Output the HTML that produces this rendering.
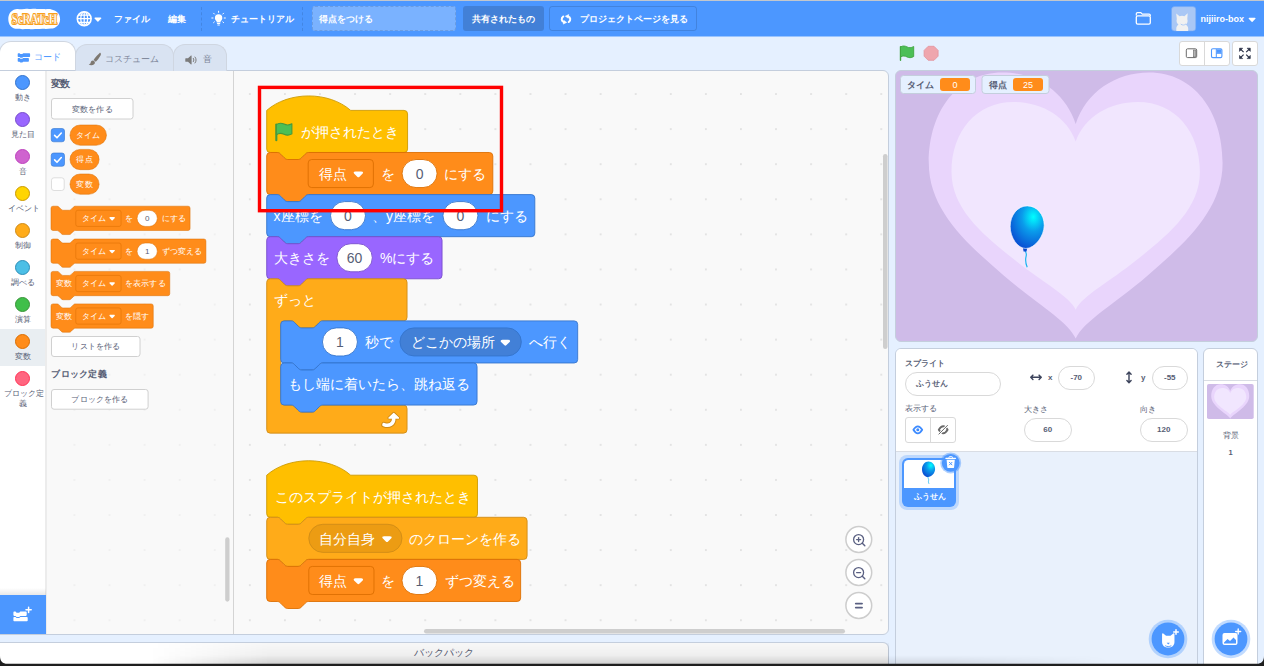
<!DOCTYPE html><html><head><meta charset="utf-8"><title>Scratch</title><style>
*{box-sizing:border-box;margin:0;padding:0}
html,body{width:1264px;height:666px;overflow:hidden;background:#E5F0FF;font-family:"Liberation Sans", sans-serif;color:#575E75}
.a{position:absolute}
#menubar{left:0;top:0;width:1264px;height:37px;background:linear-gradient(#c3c7cd 0,#c3c7cd 1px,#4C97FF 1px,#4C97FF 36px,#99C4FF 36px)}
.mt{position:absolute;color:#fff;font-weight:bold;font-size:9px;line-height:12px;white-space:nowrap}
.vd{position:absolute;top:7px;height:24px;width:0;border-left:1px dashed rgba(0,0,0,.11)}
.tab{position:absolute;border:1px solid #cfd6e1;border-bottom:none;border-radius:12px 12px 0 0;background:#D9E3F2;font-size:9px;color:#80889b;white-space:nowrap}
.tab span{position:absolute;top:0;line-height:12px}
.panel{position:absolute;background:#fff;border:1px solid #c4cedd}
.btn{position:absolute;border:1px solid #d0d0d0;background:#fff;border-radius:3px;font-size:8px;color:#575E75;text-align:center;white-space:nowrap}
.cat{position:absolute;left:0;width:45px;text-align:center;font-size:7.5px;line-height:9.5px;color:#575E75}
.dot{position:absolute;left:15px;width:15px;height:15px;border-radius:50%}
.inp{position:absolute;border:1px solid #d9d9d9;border-radius:12px;background:#fff;height:24px;font-size:8px;font-weight:bold;color:#575E75;line-height:22px;text-align:center;white-space:nowrap}
.lbl{position:absolute;font-size:7.5px;line-height:11px;white-space:nowrap;color:#575E75}
.j{display:inline-block;vertical-align:top;text-align:justify;text-align-last:justify;white-space:nowrap}
svg text{font-family:"Liberation Sans", sans-serif}
</style></head><body><div id="menubar" class="a">
<svg class="a" style="left:6px;top:6px" width="58" height="26" viewBox="6 6 58 26"><path d="M16 9.200c2-.8 4 .3 6 0c2.500-.5 4.500-.8 7-.3c2.500 .4 5-.3 7.500 0c2.500 .3 5-.2 7.500 .2c2.500 .3 5-.4 7.500 .300c4 .8 8.600 3.500 8.600 9.500c0 6-4.500 9.500-9 9.600c-2.500 .2-5 .700-7.500 .3c-2.500-.3-5 .4-7.500 .2c-2.500-.2-5 .5-7.500 .1c-2.500-.4-5 .4-7.500-.1c-2.500-.5-5 .300-7.500-.7c-3.500-1.400-5.300-5-5.300-9.500c0-4.500 2.200-8.300 7.200-9.600z" fill="#fff"/><g font-weight="bold" font-size="15.500" text-anchor="middle" stroke-linejoin="round"><text style="font-family:'Liberation Serif',serif" x="34.400" y="24.200" textLength="45.500" lengthAdjust="spacingAndGlyphs" fill="#F8A01C" stroke="#F8A01C" stroke-width="2.100">ScRATcH</text><text style="font-family:'Liberation Serif',serif" x="34.400" y="24.200" textLength="45.500" lengthAdjust="spacingAndGlyphs" fill="#fff" stroke="#F8A01C" stroke-width=".350">ScRATcH</text></g></svg>
<svg class="a" style="left:74px;top:8px" width="30" height="22" viewBox="74 9 30 22"><circle cx="84.200" cy="19.700" r="6.900" fill="#4C97FF" stroke="#fff" stroke-width="1.600"/><g stroke="#fff" stroke-width="1.250" fill="none"><ellipse cx="84.200" cy="19.700" rx="3.400" ry="6.900"/><path d="M84.200 12.700v14M77.200 19.700h14M78.300 16.100h11.800M78.300 23.300h11.800"/></g><path d="M95 18.600h5.800a.6.600 0 0 1 .45 1l-2.900 3a.6.600 0 0 1-.9 0l-2.900-3a.6.600 0 0 1 .45-1z" fill="#fff"/></svg>
<div class="mt" style="left:114px;top:12.500px"><span class="j" style="width:36.00px">ファイル</span></div>
<div class="mt" style="left:168px;top:12.500px"><span class="j" style="width:18.00px">編集</span></div>
<div class="vd" style="left:201px"></div>
<svg class="a" style="left:210px;top:9px" width="18" height="20" viewBox="210 10 18 20"><g fill="#fff"><path d="M218.600 15.300a3.700 3.700 0 0 1 3.700 3.700c0 1.500-.8 2.300-1.400 3.100c-.3 .4-.4 .8-.4 1.300h-3.800c0-.5-.1-.9-.4-1.300c-.6-.8-1.400-1.600-1.400-3.100a3.700 3.700 0 0 1 3.700-3.700z"/><rect x="216.900" y="24" width="3.400" height="1" rx=".5"/><rect x="217.300" y="25.500" width="2.600" height="1" rx=".5"/><g stroke="#fff" stroke-width="1" stroke-linecap="round"><path d="M218.600 12.200v1.200M213.600 14.200l.9 .9M223.600 14.200l-.9 .9M211.800 19h1.200M224.200 19h1.200M213.600 23.600l.8-.7M223.600 23.600l-.8-.7"/></g></g></svg>
<div class="mt" style="left:230.500px;top:12.500px"><span class="j" style="width:63.00px">チュートリアル</span></div>
<div class="vd" style="left:302px"></div>
<div class="a" style="left:312px;top:6px;width:144px;height:25px;border:1px dashed rgba(0,0,0,.12);border-radius:3px;background:rgba(255,255,255,.26)"></div>
<div class="mt" style="left:318.500px;top:12.500px"><span class="j" style="width:54.00px">得点をつける</span></div>
<div class="a" style="left:462.500px;top:6px;width:81px;height:25px;border-radius:3px;background:#4280D7"></div>
<div class="mt" style="left:471.500px;top:12.500px"><span class="j" style="width:63.00px">共有されたもの</span></div>
<div class="a" style="left:549px;top:6px;width:148px;height:25px;border-radius:3px;border:1px solid rgba(0,0,0,.13)"></div>
<svg class="a" style="left:559.300px;top:11.700px" width="14" height="14" viewBox="0 0 14 14"><g transform="translate(0,7.300) scale(1,-.8) translate(0,-7)"><g id="rfa"><path d="M5 3.300C2.300 4.600 1.900 8.200 4.300 10.600" fill="none" stroke="#fff" stroke-width="2" stroke-linecap="round"/><path d="M4.300 1l3.400 2.100l-3 2.600z" fill="#fff" stroke="#fff" stroke-width=".6" stroke-linejoin="round"/></g><use href="#rfa" transform="rotate(180 7 7)"/></g></svg>
<div class="mt" style="left:580px;top:12.500px"><span class="j" style="width:108.00px">プロジェクトページを見る</span></div>
<svg class="a" style="left:1134px;top:11px" width="19" height="16" viewBox="1134 12 19 16"><path d="M1136.300 16.400v-1.600a1.200 1.200 0 0 1 1.200-1.200h3.300l1.500 1.500h6.800a1.200 1.200 0 0 1 1.200 1.200v.6" fill="none" stroke="#fff" stroke-width="1.200"/><rect x="1136.300" y="16.800" width="14" height="8.400" rx="1.400" fill="none" stroke="#fff" stroke-width="1.300"/></svg>
<svg class="a" style="left:1171px;top:6px" width="26" height="26" viewBox="1171 6 26 26"><rect x="1171.500" y="6.600" width="24.300" height="24.400" rx="3" fill="#A9C7F5" stroke="#6FA6F5" stroke-width=".6"/><path d="M1176.300 31v-2.500c0-1.800 1-3 2.200-3.700c-1.600-1.400-2.400-3.600-1.700-5.800l-.6-5.600l3.400 2.900c1.500-.7 3.300-.7 4.800 0l3.300-3l-.4 5.600c.8 2.200 .1 4.500-1.600 5.900c1.300 .7 2.500 1.900 2.500 3.700v2.500z" fill="#F1F1F1"/><path d="M1181 24.300c1.500 1.100 3.400 1.100 4.800-.2" stroke="#A9C7F5" stroke-width=".9" fill="none" stroke-linecap="round"/></svg>
<svg class="a" style="left:1199px;top:10px" width="48" height="18" viewBox="1199 10 48 18"><text x="1200.600" y="22" font-size="9" font-weight="bold" fill="#fff" textLength="43.400" lengthAdjust="spacingAndGlyphs">nijiiro-box</text></svg>
<svg class="a" style="left:1247.500px;top:16px" width="10" height="8" viewBox="0 0 10 8"><path d="M1.200 1.800h5.800a.6.600 0 0 1 .45 1l-2.900 3a.6.600 0 0 1-.9 0l-2.900-3a.6.600 0 0 1 .45-1z" fill="#fff"/></svg>
</div>
<div class="tab" style="left:-1px;top:41px;width:77px;height:29px;background:#fff;color:#4C97FF;z-index:3"><span style="left:33.500px;top:8.500px;font-size:8.500px"><span class="j" style="width:25.50px">コード</span></span><svg class="a" style="left:17px;top:10px" width="14" height="12" viewBox="0 0 14 12"><g fill="#4C97FF"><path d="M1.400 1.200h1.100l.9 .8h1.900l.9-.8h6.200a.7.700 0 0 1 .7 .7v2.300a.7.700 0 0 1-.7 .7h-6.200l-.9 .8h-1.900l-.9-.8h-1.100a.7.700 0 0 1-.7-.7v-2.300a.7.700 0 0 1 .7-.7z"/><path d="M1.400 6h1.100l.9 .8h1.900l.9-.8h5a.7.700 0 0 1 .7 .7v2.300a.7.700 0 0 1-.7 .7h-5l-.9 .8h-1.900l-.9-.8h-1.100a.7.700 0 0 1-.7-.7v-2.300a.7.700 0 0 1 .7-.7z"/></g></svg></div>
<div class="tab" style="left:75px;top:44px;width:99px;height:27px;z-index:2"><span style="left:28.500px;top:8px"><span class="j" style="width:54.00px">コスチューム</span></span><svg class="a" style="left:12px;top:7px" width="14" height="14" viewBox="0 0 14 14"><g fill="#7d7871"><path d="M12.400 .9c.9 .5 .6 1.700-.2 3.200c-1.100 2.100-2.900 4.400-4.400 5.700l-2.200-1.900c1.100-1.600 3.100-3.900 4.800-5.600c.9-.9 1.500-1.600 2-1.400z"/><path d="M5 8.600c1 .1 1.900 1 1.900 2.100c0 1.600-1.800 2.600-3.600 2.500c-1.100-.1-2-.5-2.600-1.300c1.300 0 1.800-.5 2-1.500c.2-1 1.200-1.900 2.300-1.800z"/></g></svg></div>
<div class="tab" style="left:173px;top:44px;width:54px;height:27px;z-index:1"><span style="left:29px;top:8px">音</span><svg class="a" style="left:11px;top:10px" width="15" height="10" viewBox="0 0 15 10"><path d="M.8 3.200h2.200l3-2.600c.3-.2 .6 0 .6 .3v8.200c0 .3-.3 .5-.6 .3l-3-2.600h-2.200a.5.500 0 0 1-.5-.5v-2.600a.5.500 0 0 1 .5-.5z" fill="#7b7b7b"/><path d="M8.300 3.300c.8 .9 .8 2.500 0 3.400M10 2c1.500 1.700 1.500 4.300 0 6" fill="none" stroke="#7b7b7b" stroke-width="1" stroke-linecap="round"/></svg></div>
<div class="a" style="left:-1px;top:70px;width:890px;height:565px;border:1px solid #c4cedd;border-radius:0 6px 6px 0;background:#F9F9F9;overflow:hidden">
<div class="a" id="cats" style="left:0;top:0;width:47px;height:565px;background:linear-gradient(90deg,#fff 45px,#ececec 45px)">
<div class="dot" style="left:15px;top:4.0px;background:#4C97FF;border:1px solid #3373CC"></div>
<div class="cat" style="left:0px;top:22.0px"><span class="j" style="width:15.00px">動き</span></div>
<div class="dot" style="left:15px;top:41.0px;background:#9966FF;border:1px solid #774DCB"></div>
<div class="cat" style="left:0px;top:59.0px"><span class="j" style="width:22.50px">見た目</span></div>
<div class="dot" style="left:15px;top:78.0px;background:#CF63CF;border:1px solid #BD42BD"></div>
<div class="cat" style="left:0px;top:96.0px"><span class="j" style="width:7.50px">音</span></div>
<div class="dot" style="left:15px;top:115.0px;background:#FFD500;border:1px solid #CC9900"></div>
<div class="cat" style="left:0px;top:133.0px"><span class="j" style="width:30.00px">イベント</span></div>
<div class="dot" style="left:15px;top:152.0px;background:#FFAB19;border:1px solid #CF8B17"></div>
<div class="cat" style="left:0px;top:170.0px"><span class="j" style="width:15.00px">制御</span></div>
<div class="dot" style="left:15px;top:189.0px;background:#4CBFE6;border:1px solid #2E8EB8"></div>
<div class="cat" style="left:0px;top:207.0px"><span class="j" style="width:22.50px">調べる</span></div>
<div class="dot" style="left:15px;top:226.0px;background:#40BF4A;border:1px solid #389438"></div>
<div class="cat" style="left:0px;top:244.0px"><span class="j" style="width:15.00px">演算</span></div>
<div class="a" style="left:0px;top:258.0px;width:45px;height:36.5px;background:#E9EEF2"></div>
<div class="dot" style="left:15px;top:263.0px;background:#FF8C1A;border:1px solid #DB6E00"></div>
<div class="cat" style="left:0px;top:281.0px"><span class="j" style="width:15.00px">変数</span></div>
<div class="dot" style="left:15px;top:300.0px;background:#FF6680;border:1px solid #FF3355"></div>
<div class="cat" style="left:0px;top:318.0px"><span class="j" style="width:37.50px">ブロック定</span><br><span class="j" style="width:7.50px">義</span></div>
<div class="a" style="left:0;top:517px;width:46px;height:7px;background:linear-gradient(rgba(0,0,0,0),rgba(0,0,0,.09))"></div>
<div class="a" style="left:0;top:524px;width:46px;height:41px;background:#4C97FF"><svg class="a" style="left:13px;top:11px" width="20" height="18" viewBox="0 0 20 18"><g fill="#fff"><path d="M1.2 5.6h1.3l1.1 1.1h2.6l1.1-1.1h5.6a.8.8 0 0 1 .8.8v2.7a.8.8 0 0 1-.8.8H7.3l-1.1 1.1H3.6L2.5 9.9H1.2a.8.8 0 0 1-.8-.8V6.4a.8.8 0 0 1 .8-.8z"/><path d="M1.2 10.9h1.3l1.1 1.1h2.6l1.1-1.1h6.6a.8.8 0 0 1 .8.8v2.7a.8.8 0 0 1-.8.8H1.2a.8.8 0 0 1-.8-.8v-2.7a.8.8 0 0 1 .8-.8z"/><path d="M15.6 1.2v5.2M13 3.8h5.2" stroke="#fff" stroke-width="1.5" stroke-linecap="round"/></g></svg></div>
</div>
<svg class="a" style="left:46px;top:0" width="188" height="563" viewBox="46 71 188 563"><defs><pattern id="fgrid" x="267.400" y="76.500" width="35.080" height="35.080" patternUnits="userSpaceOnUse"><rect x="16.700" y="16.750" width="1.600" height="1.600" fill="#ececec"/></pattern></defs><rect x="46" y="71" width="188" height="563" fill="url(#fgrid)"/><text x="51.4" y="83.3" font-size="9.5" font-weight="bold" fill="#575E75" text-anchor="start" dominant-baseline="central" textLength="19.00">変数</text><rect x="51.5" y="98.5" width="81.5" height="20.5" rx="2.5" fill="#fff" stroke="#d0d0d0"/><text x="92.25" y="109.05" font-size="8.1" font-weight="400" fill="#575E75" text-anchor="middle" dominant-baseline="central" textLength="40.50">変数を作る</text><rect x="51.2" y="128.5" width="13.3" height="13.3" rx="2.5" fill="#4C97FF" stroke="#3373CC" stroke-width=".6"/><path d="M54.6 135.4l2.4 2.4l4.3-4.8" fill="none" stroke="#fff" stroke-width="1.6" stroke-linecap="round" stroke-linejoin="round"/><g transform="translate(70,125) scale(0.50625)"><rect x="0" y="0" width="72" height="40" rx="20" fill="#FF8C1A" stroke="#DB6E00"/><text x="36.0" y="20.5" fill="#fff" font-size="16" font-weight="500" text-anchor="middle" dominant-baseline="central" textLength="48.00">タイム</text></g><rect x="51.2" y="153" width="13.3" height="13.3" rx="2.5" fill="#4C97FF" stroke="#3373CC" stroke-width=".6"/><path d="M54.6 159.9l2.4 2.4l4.3-4.8" fill="none" stroke="#fff" stroke-width="1.6" stroke-linecap="round" stroke-linejoin="round"/><g transform="translate(70,149.4) scale(0.50625)"><rect x="0" y="0" width="57.5" height="40" rx="20" fill="#FF8C1A" stroke="#DB6E00"/><text x="28.75" y="20.5" fill="#fff" font-size="16" font-weight="500" text-anchor="middle" dominant-baseline="central" textLength="32.00">得点</text></g><rect x="51.5" y="177.8" width="12.7" height="12.7" rx="2.5" fill="#fff" stroke="#d6d6d6" stroke-width=".8"/><g transform="translate(70,174) scale(0.50625)"><rect x="0" y="0" width="57.5" height="40" rx="20" fill="#FF8C1A" stroke="#DB6E00"/><text x="28.75" y="20.5" fill="#fff" font-size="16" font-weight="500" text-anchor="middle" dominant-baseline="central" textLength="32.00">変数</text></g><g transform="translate(51,206.2) scale(0.50625)"><path d="m 0,4 A 4,4 0 0,1 4,0 H 12 c 2,0 3,1 4,2 l 4,4 c 1,1 2,2 4,2 h 12 c 2,0 3,-1 4,-2 l 4,-4 c 1,-1 2,-2 4,-2 H 270.7 a 4,4 0 0,1 4,4 v 40 a 4,4 0 0,1 -4,4 H 48 c -2,0 -3,1 -4,2 l -4,4 c -1,1 -2,2 -4,2 h -12 c -2,0 -3,-1 -4,-2 l -4,-4 c -1,-1 -2,-2 -4,-2 H 4 a 4,4 0 0,1 -4,-4 z" fill="#FF8C1A" stroke="#DB6E00"/><rect x="49" y="8" width="89.4" height="32" rx="4" fill="#FF8C1A" stroke="#DB6E00"/><text x="61" y="24.3" fill="#fff" font-size="16" font-weight="500" text-anchor="start" dominant-baseline="central" textLength="48.00">タイム</text><path transform="translate(114.4,20.5) scale(1.0)" fill="#fff" d="M6.36,7.79a1.43,1.43,0,0,1-1-.42L1.42,3.45a1.44,1.44,0,0,1,0-2c0.56-.56,9.31-0.56,9.87,0a1.44,1.44,0,0,1,0,2L7.37,7.37A1.43,1.43,0,0,1,6.36,7.79Z"/><text x="146.4" y="24.3" fill="#fff" font-size="16" font-weight="500" text-anchor="start" dominant-baseline="central">を</text><rect x="170" y="8" width="40" height="32" rx="16.0" fill="#fff" stroke="#DB6E00"/><text x="190.0" y="24.3" fill="#575E75" font-size="16" font-weight="500" text-anchor="middle" dominant-baseline="central">0</text><text x="218.5" y="24.3" fill="#fff" font-size="16" font-weight="500" text-anchor="start" dominant-baseline="central" textLength="48.00">にする</text></g><g transform="translate(51,239) scale(0.50625)"><path d="m 0,4 A 4,4 0 0,1 4,0 H 12 c 2,0 3,1 4,2 l 4,4 c 1,1 2,2 4,2 h 12 c 2,0 3,-1 4,-2 l 4,-4 c 1,-1 2,-2 4,-2 H 302 a 4,4 0 0,1 4,4 v 40 a 4,4 0 0,1 -4,4 H 48 c -2,0 -3,1 -4,2 l -4,4 c -1,1 -2,2 -4,2 h -12 c -2,0 -3,-1 -4,-2 l -4,-4 c -1,-1 -2,-2 -4,-2 H 4 a 4,4 0 0,1 -4,-4 z" fill="#FF8C1A" stroke="#DB6E00"/><rect x="49" y="8" width="89.4" height="32" rx="4" fill="#FF8C1A" stroke="#DB6E00"/><text x="61" y="24.3" fill="#fff" font-size="16" font-weight="500" text-anchor="start" dominant-baseline="central" textLength="48.00">タイム</text><path transform="translate(114.4,20.5) scale(1.0)" fill="#fff" d="M6.36,7.79a1.43,1.43,0,0,1-1-.42L1.42,3.45a1.44,1.44,0,0,1,0-2c0.56-.56,9.31-0.56,9.87,0a1.44,1.44,0,0,1,0,2L7.37,7.37A1.43,1.43,0,0,1,6.36,7.79Z"/><text x="146.4" y="24.3" fill="#fff" font-size="16" font-weight="500" text-anchor="start" dominant-baseline="central">を</text><rect x="170" y="8" width="40" height="32" rx="16.0" fill="#fff" stroke="#DB6E00"/><text x="190.0" y="24.3" fill="#575E75" font-size="16" font-weight="500" text-anchor="middle" dominant-baseline="central">1</text><text x="218.5" y="24.3" fill="#fff" font-size="16" font-weight="500" text-anchor="start" dominant-baseline="central" textLength="80.00">ずつ変える</text></g><g transform="translate(51,271.4) scale(0.50625)"><path d="m 0,4 A 4,4 0 0,1 4,0 H 12 c 2,0 3,1 4,2 l 4,4 c 1,1 2,2 4,2 h 12 c 2,0 3,-1 4,-2 l 4,-4 c 1,-1 2,-2 4,-2 H 230.6 a 4,4 0 0,1 4,4 v 40 a 4,4 0 0,1 -4,4 H 48 c -2,0 -3,1 -4,2 l -4,4 c -1,1 -2,2 -4,2 h -12 c -2,0 -3,-1 -4,-2 l -4,-4 c -1,-1 -2,-2 -4,-2 H 4 a 4,4 0 0,1 -4,-4 z" fill="#FF8C1A" stroke="#DB6E00"/><text x="8.9" y="24.3" fill="#fff" font-size="16" font-weight="500" text-anchor="start" dominant-baseline="central" textLength="32.00">変数</text><rect x="49" y="8" width="89.4" height="32" rx="4" fill="#FF8C1A" stroke="#DB6E00"/><text x="61" y="24.3" fill="#fff" font-size="16" font-weight="500" text-anchor="start" dominant-baseline="central" textLength="48.00">タイム</text><path transform="translate(114.4,20.5) scale(1.0)" fill="#fff" d="M6.36,7.79a1.43,1.43,0,0,1-1-.42L1.42,3.45a1.44,1.44,0,0,1,0-2c0.56-.56,9.31-0.56,9.87,0a1.44,1.44,0,0,1,0,2L7.37,7.37A1.43,1.43,0,0,1,6.36,7.79Z"/><text x="146.4" y="24.3" fill="#fff" font-size="16" font-weight="500" text-anchor="start" dominant-baseline="central" textLength="80.00">を表示する</text></g><g transform="translate(51,303.9) scale(0.50625)"><path d="m 0,4 A 4,4 0 0,1 4,0 H 12 c 2,0 3,1 4,2 l 4,4 c 1,1 2,2 4,2 h 12 c 2,0 3,-1 4,-2 l 4,-4 c 1,-1 2,-2 4,-2 H 198 a 4,4 0 0,1 4,4 v 40 a 4,4 0 0,1 -4,4 H 48 c -2,0 -3,1 -4,2 l -4,4 c -1,1 -2,2 -4,2 h -12 c -2,0 -3,-1 -4,-2 l -4,-4 c -1,-1 -2,-2 -4,-2 H 4 a 4,4 0 0,1 -4,-4 z" fill="#FF8C1A" stroke="#DB6E00"/><text x="8.9" y="24.3" fill="#fff" font-size="16" font-weight="500" text-anchor="start" dominant-baseline="central" textLength="32.00">変数</text><rect x="49" y="8" width="89.4" height="32" rx="4" fill="#FF8C1A" stroke="#DB6E00"/><text x="61" y="24.3" fill="#fff" font-size="16" font-weight="500" text-anchor="start" dominant-baseline="central" textLength="48.00">タイム</text><path transform="translate(114.4,20.5) scale(1.0)" fill="#fff" d="M6.36,7.79a1.43,1.43,0,0,1-1-.42L1.42,3.45a1.44,1.44,0,0,1,0-2c0.56-.56,9.31-0.56,9.87,0a1.44,1.44,0,0,1,0,2L7.37,7.37A1.43,1.43,0,0,1,6.36,7.79Z"/><text x="146.4" y="24.3" fill="#fff" font-size="16" font-weight="500" text-anchor="start" dominant-baseline="central" textLength="48.00">を隠す</text></g><rect x="51.5" y="336.5" width="88.5" height="20" rx="2.5" fill="#fff" stroke="#d0d0d0"/><text x="95.75" y="346.8" font-size="8.1" font-weight="400" fill="#575E75" text-anchor="middle" dominant-baseline="central" textLength="48.60">リストを作る</text><text x="51.4" y="373.5" font-size="9.2" font-weight="bold" fill="#575E75" text-anchor="start" dominant-baseline="central" textLength="55.20">ブロック定義</text><rect x="51.5" y="389.5" width="96.6" height="19.7" rx="2.5" fill="#fff" stroke="#d0d0d0"/><text x="99.8" y="399.65000000000003" font-size="8.1" font-weight="400" fill="#575E75" text-anchor="middle" dominant-baseline="central" textLength="56.70">ブロックを作る</text><rect x="225.2" y="537.3" width="4.3" height="64.4" rx="2.15" fill="#cecece"/></svg>
<div class="a" style="left:233px;top:0;width:1px;height:565px;background:#d4d4d4"></div>
</div>
<svg class="a" style="left:234px;top:71px" width="654" height="563" viewBox="234 71 654 563"><defs><pattern id="grid" x="267.400" y="76.500" width="35.080" height="35.080" patternUnits="userSpaceOnUse"><rect x="16.7" y="16.75" width="1.6" height="1.6" fill="#dadada"/></pattern></defs><rect x="234" y="71" width="654" height="563" fill="url(#grid)"/><g transform="translate(266.7,110.4) scale(0.875,0.877)"><g transform="translate(0,0)"><path d="m 0,0 c 25,-22 71,-22 96,0 H 157.0 a 4,4 0 0,1 4,4 v 40 a 4,4 0 0,1 -4,4 H 48 c -2,0 -3,1 -4,2 l -4,4 c -1,1 -2,2 -4,2 h -12 c -2,0 -3,-1 -4,-2 l -4,-4 c -1,-1 -2,-2 -4,-2 H 4 a 4,4 0 0,1 -4,-4 z" fill="#FFBF00" stroke="#CC9900" stroke-width="1"/><g transform="translate(-0.6,0)"><g transform="translate(8.4,13)"><path d="M3.2 21V3" stroke="#45993D" stroke-width="2.400" stroke-linecap="round" fill="none"/><path d="M3.2 3.2C6.5 0.8 9.5 1.400 12 2.600c2.600 1.300 5.600 1.500 9 -0.400v11.600c-3.400 1.900 -6.400 1.700 -9 0.400c-2.500 -1.200 -5.500 -1.800 -8.800 0.600z" fill="#4CBF56" stroke="#45993D" stroke-width="1.200" stroke-linejoin="round"/></g><text x="40" y="24.3" fill="#fff" font-size="16" font-weight="500" text-anchor="start" dominant-baseline="central" textLength="112.00">が押されたとき</text></g></g><g transform="translate(0,48)"><path d="m 0,4 A 4,4 0 0,1 4,0 H 12 c 2,0 3,1 4,2 l 4,4 c 1,1 2,2 4,2 h 12 c 2,0 3,-1 4,-2 l 4,-4 c 1,-1 2,-2 4,-2 H 254.39999999999998 a 4,4 0 0,1 4,4 v 40 a 4,4 0 0,1 -4,4 H 48 c -2,0 -3,1 -4,2 l -4,4 c -1,1 -2,2 -4,2 h -12 c -2,0 -3,-1 -4,-2 l -4,-4 c -1,-1 -2,-2 -4,-2 H 4 a 4,4 0 0,1 -4,-4 z" fill="#FF8C1A" stroke="#DB6E00" stroke-width="1"/><g transform="translate(-0.6,0)"><rect x="48" y="8" width="74.5" height="32" rx="4" fill="#FF8C1A" stroke="#DB6E00"/><text x="60" y="24.3" fill="#fff" font-size="16" font-weight="500" text-anchor="start" dominant-baseline="central" textLength="32.00">得点</text><path transform="translate(99,20.5) scale(1.0)" fill="#fff" d="M6.36,7.79a1.43,1.43,0,0,1-1-.42L1.42,3.45a1.44,1.44,0,0,1,0-2c0.56-.56,9.31-0.56,9.87,0a1.44,1.44,0,0,1,0,2L7.37,7.37A1.43,1.43,0,0,1,6.36,7.79Z"/><text x="131.5" y="24.3" fill="#fff" font-size="16" font-weight="500" text-anchor="start" dominant-baseline="central">を</text><rect x="155.3" y="8" width="40" height="32" rx="16.0" fill="#fff" stroke="#DB6E00"/><text x="175.3" y="24.3" fill="#575E75" font-size="16" font-weight="500" text-anchor="middle" dominant-baseline="central">0</text><text x="203.5" y="24.3" fill="#fff" font-size="16" font-weight="500" text-anchor="start" dominant-baseline="central" textLength="48.00">にする</text></g></g><g transform="translate(0,96)"><path d="m 0,4 A 4,4 0 0,1 4,0 H 12 c 2,0 3,1 4,2 l 4,4 c 1,1 2,2 4,2 h 12 c 2,0 3,-1 4,-2 l 4,-4 c 1,-1 2,-2 4,-2 H 302.4 a 4,4 0 0,1 4,4 v 40 a 4,4 0 0,1 -4,4 H 48 c -2,0 -3,1 -4,2 l -4,4 c -1,1 -2,2 -4,2 h -12 c -2,0 -3,-1 -4,-2 l -4,-4 c -1,-1 -2,-2 -4,-2 H 4 a 4,4 0 0,1 -4,-4 z" fill="#4C97FF" stroke="#3373CC" stroke-width="1"/><g transform="translate(-0.6,0)"><text x="8.5" y="24.3" fill="#fff" font-size="16" font-weight="500" text-anchor="start" dominant-baseline="central" textLength="56.00">x座標を</text><rect x="73.5" y="8" width="40" height="32" rx="16.0" fill="#fff" stroke="#3373CC"/><text x="93.5" y="24.3" fill="#575E75" font-size="16" font-weight="500" text-anchor="middle" dominant-baseline="central">0</text><text x="121" y="24.3" fill="#fff" font-size="16" font-weight="500" text-anchor="start" dominant-baseline="central" textLength="72.00">、y座標を</text><rect x="202" y="8" width="40" height="32" rx="16.0" fill="#fff" stroke="#3373CC"/><text x="222.0" y="24.3" fill="#575E75" font-size="16" font-weight="500" text-anchor="middle" dominant-baseline="central">0</text><text x="251" y="24.3" fill="#fff" font-size="16" font-weight="500" text-anchor="start" dominant-baseline="central" textLength="48.00">にする</text></g></g><g transform="translate(0,144)"><path d="m 0,4 A 4,4 0 0,1 4,0 H 12 c 2,0 3,1 4,2 l 4,4 c 1,1 2,2 4,2 h 12 c 2,0 3,-1 4,-2 l 4,-4 c 1,-1 2,-2 4,-2 H 196.4 a 4,4 0 0,1 4,4 v 40 a 4,4 0 0,1 -4,4 H 48 c -2,0 -3,1 -4,2 l -4,4 c -1,1 -2,2 -4,2 h -12 c -2,0 -3,-1 -4,-2 l -4,-4 c -1,-1 -2,-2 -4,-2 H 4 a 4,4 0 0,1 -4,-4 z" fill="#9966FF" stroke="#774DCB" stroke-width="1"/><g transform="translate(-0.6,0)"><text x="8.5" y="24.3" fill="#fff" font-size="16" font-weight="500" text-anchor="start" dominant-baseline="central" textLength="64.00">大きさを</text><rect x="80.8" y="8" width="40.5" height="32" rx="16.0" fill="#fff" stroke="#774DCB"/><text x="101.05" y="24.3" fill="#575E75" font-size="16" font-weight="500" text-anchor="middle" dominant-baseline="central">60</text><text x="130" y="24.3" fill="#fff" font-size="16" font-weight="500" text-anchor="start" dominant-baseline="central" textLength="62.23">%にする</text></g></g><g transform="translate(0,192)"><path d="m 0,4 A 4,4 0 0,1 4,0 H 12 c 2,0 3,1 4,2 l 4,4 c 1,1 2,2 4,2 h 12 c 2,0 3,-1 4,-2 l 4,-4 c 1,-1 2,-2 4,-2 H 156.4 a 4,4 0 0,1 4,4 v 40 a 4,4 0 0,1 -4,4 H 64 c -2,0 -3,1 -4,2 l -4,4 c -1,1 -2,2 -4,2 h -12 c -2,0 -3,-1 -4,-2 l -4,-4 c -1,-1 -2,-2 -4,-2 h -8 a 4,4 0 0,0 -4,4 v 88 a 4,4 0 0,0 4,4 h 8 c 2,0 3,1 4,2 l 4,4 c 1,1 2,2 4,2 h 12 c 2,0 3,-1 4,-2 l 4,-4 c 1,-1 2,-2 4,-2 H 156.4 a 4,4 0 0,1 4,4 v 24 a 4,4 0 0,1 -4,4 H 4 a 4,4 0 0,1 -4,-4 z" fill="#FFAB19" stroke="#CF8B17" stroke-width="1"/><g transform="translate(-0.6,0)"><text x="9.5" y="24.3" fill="#fff" font-size="16" font-weight="500" text-anchor="start" dominant-baseline="central" textLength="48.00">ずっと</text><g fill="none" stroke-linecap="round" stroke-linejoin="round"><path d="M145.8 159.5C145.8 165 141 168.8 134.6 166.300" stroke="#CF8B17" stroke-width="6.200"/><path d="M145.800 153.400L151.300 158.800H140.300z" fill="#CF8B17" stroke="#CF8B17" stroke-width="3.400"/><path d="M145.8 159.5C145.8 165 141 168.8 134.6 166.300" stroke="#fff" stroke-width="4"/><path d="M145.800 153.400L151.300 158.800H140.300z" fill="#fff" stroke="#fff" stroke-width="1.400"/></g></g><g transform="translate(16,48)"><path d="m 0,4 A 4,4 0 0,1 4,0 H 12 c 2,0 3,1 4,2 l 4,4 c 1,1 2,2 4,2 h 12 c 2,0 3,-1 4,-2 l 4,-4 c 1,-1 2,-2 4,-2 H 335.4 a 4,4 0 0,1 4,4 v 40 a 4,4 0 0,1 -4,4 H 48 c -2,0 -3,1 -4,2 l -4,4 c -1,1 -2,2 -4,2 h -12 c -2,0 -3,-1 -4,-2 l -4,-4 c -1,-1 -2,-2 -4,-2 H 4 a 4,4 0 0,1 -4,-4 z" fill="#4C97FF" stroke="#3373CC" stroke-width="1"/><g transform="translate(-0.6,0)"><rect x="48.3" y="8" width="40" height="32" rx="16.0" fill="#fff" stroke="#3373CC"/><text x="68.3" y="24.3" fill="#575E75" font-size="16" font-weight="500" text-anchor="middle" dominant-baseline="central">1</text><text x="96.7" y="24.3" fill="#fff" font-size="16" font-weight="500" text-anchor="start" dominant-baseline="central" textLength="32.00">秒で</text><rect x="136.9" y="8" width="138.7" height="32" rx="16.0" fill="#4280D7" stroke="#3373CC"/><text x="149" y="24.3" fill="#fff" font-size="16" font-weight="500" text-anchor="start" dominant-baseline="central" textLength="96.00">どこかの場所</text><path transform="translate(251,20.5) scale(1.0)" fill="#fff" d="M6.36,7.79a1.43,1.43,0,0,1-1-.42L1.42,3.45a1.44,1.44,0,0,1,0-2c0.56-.56,9.31-0.56,9.87,0a1.44,1.44,0,0,1,0,2L7.37,7.37A1.43,1.43,0,0,1,6.36,7.79Z"/><text x="284" y="24.3" fill="#fff" font-size="16" font-weight="500" text-anchor="start" dominant-baseline="central" textLength="48.00">へ行く</text></g></g><g transform="translate(16,96)"><path d="m 0,4 A 4,4 0 0,1 4,0 H 12 c 2,0 3,1 4,2 l 4,4 c 1,1 2,2 4,2 h 12 c 2,0 3,-1 4,-2 l 4,-4 c 1,-1 2,-2 4,-2 H 220.4 a 4,4 0 0,1 4,4 v 40 a 4,4 0 0,1 -4,4 H 48 c -2,0 -3,1 -4,2 l -4,4 c -1,1 -2,2 -4,2 h -12 c -2,0 -3,-1 -4,-2 l -4,-4 c -1,-1 -2,-2 -4,-2 H 4 a 4,4 0 0,1 -4,-4 z" fill="#4C97FF" stroke="#3373CC" stroke-width="1"/><g transform="translate(-0.6,0)"><text x="8.9" y="24.3" fill="#fff" font-size="16" font-weight="500" text-anchor="start" dominant-baseline="central" textLength="208.00">もし端に着いたら、跳ね返る</text></g></g></g></g><g transform="translate(266.7,475.2) scale(0.875,0.877)"><g transform="translate(0,0)"><path d="m 0,0 c 25,-22 71,-22 96,0 H 236.9 a 4,4 0 0,1 4,4 v 40 a 4,4 0 0,1 -4,4 H 48 c -2,0 -3,1 -4,2 l -4,4 c -1,1 -2,2 -4,2 h -12 c -2,0 -3,-1 -4,-2 l -4,-4 c -1,-1 -2,-2 -4,-2 H 4 a 4,4 0 0,1 -4,-4 z" fill="#FFBF00" stroke="#CC9900" stroke-width="1"/><g transform="translate(-0.6,0)"><text x="10.5" y="24.3" fill="#fff" font-size="16" font-weight="500" text-anchor="start" dominant-baseline="central" textLength="224.00">このスプライトが押されたとき</text></g></g><g transform="translate(0,48)"><path d="m 0,4 A 4,4 0 0,1 4,0 H 12 c 2,0 3,1 4,2 l 4,4 c 1,1 2,2 4,2 h 12 c 2,0 3,-1 4,-2 l 4,-4 c 1,-1 2,-2 4,-2 H 293.6 a 4,4 0 0,1 4,4 v 40 a 4,4 0 0,1 -4,4 H 48 c -2,0 -3,1 -4,2 l -4,4 c -1,1 -2,2 -4,2 h -12 c -2,0 -3,-1 -4,-2 l -4,-4 c -1,-1 -2,-2 -4,-2 H 4 a 4,4 0 0,1 -4,-4 z" fill="#FFAB19" stroke="#CF8B17" stroke-width="1"/><g transform="translate(-0.6,0)"><rect x="48.7" y="8" width="106.5" height="32" rx="16.0" fill="#EC9C13" stroke="#CF8B17"/><text x="60.3" y="24.3" fill="#fff" font-size="16" font-weight="500" text-anchor="start" dominant-baseline="central" textLength="64.00">自分自身</text><path transform="translate(131.7,20.5) scale(1.0)" fill="#fff" d="M6.36,7.79a1.43,1.43,0,0,1-1-.42L1.42,3.45a1.44,1.44,0,0,1,0-2c0.56-.56,9.31-0.56,9.87,0a1.44,1.44,0,0,1,0,2L7.37,7.37A1.43,1.43,0,0,1,6.36,7.79Z"/><text x="163.4" y="24.3" fill="#fff" font-size="16" font-weight="500" text-anchor="start" dominant-baseline="central" textLength="128.00">のクローンを作る</text></g></g><g transform="translate(0,96)"><path d="m 0,4 A 4,4 0 0,1 4,0 H 12 c 2,0 3,1 4,2 l 4,4 c 1,1 2,2 4,2 h 12 c 2,0 3,-1 4,-2 l 4,-4 c 1,-1 2,-2 4,-2 H 286.2 a 4,4 0 0,1 4,4 v 40 a 4,4 0 0,1 -4,4 H 48 c -2,0 -3,1 -4,2 l -4,4 c -1,1 -2,2 -4,2 h -12 c -2,0 -3,-1 -4,-2 l -4,-4 c -1,-1 -2,-2 -4,-2 H 4 a 4,4 0 0,1 -4,-4 z" fill="#FF8C1A" stroke="#DB6E00" stroke-width="1"/><g transform="translate(-0.6,0)"><rect x="48.7" y="8" width="74.5" height="32" rx="4" fill="#FF8C1A" stroke="#DB6E00"/><text x="60" y="24.3" fill="#fff" font-size="16" font-weight="500" text-anchor="start" dominant-baseline="central" textLength="32.00">得点</text><path transform="translate(99,20.5) scale(1.0)" fill="#fff" d="M6.36,7.79a1.43,1.43,0,0,1-1-.42L1.42,3.45a1.44,1.44,0,0,1,0-2c0.56-.56,9.31-0.56,9.87,0a1.44,1.44,0,0,1,0,2L7.37,7.37A1.43,1.43,0,0,1,6.36,7.79Z"/><text x="131.7" y="24.3" fill="#fff" font-size="16" font-weight="500" text-anchor="start" dominant-baseline="central">を</text><rect x="155.2" y="8" width="40" height="32" rx="16.0" fill="#fff" stroke="#DB6E00"/><text x="175.2" y="24.3" fill="#575E75" font-size="16" font-weight="500" text-anchor="middle" dominant-baseline="central">1</text><text x="204.7" y="24.3" fill="#fff" font-size="16" font-weight="500" text-anchor="start" dominant-baseline="central" textLength="80.00">ずつ変える</text></g></g></g><rect x="259.500" y="87.400" width="242" height="123.300" fill="none" stroke="#FF0000" stroke-width="3.400"/><rect x="883" y="154" width="4.5" height="195" rx="2.25" fill="#cecece"/><rect x="424" y="629" width="421" height="4.5" rx="2.25" fill="#cecece"/><circle cx="858.8" cy="539.5" r="12.9" fill="#fff" stroke="#cdcdcd" stroke-width="1.5"/><circle cx="858.6" cy="539.6" r="5" fill="none" stroke="#5a6082" stroke-width="1.3"/><path d="M862.3 543.3l2.500 2.500" stroke="#5a6082" stroke-width="1.400" stroke-linecap="round"/><path d="M856.600 539.6h4" stroke="#5a6082" stroke-width="1.300" stroke-linecap="round"/><path d="M858.600 537.6v4" stroke="#5a6082" stroke-width="1.300" stroke-linecap="round"/><circle cx="858.8" cy="572.5" r="12.9" fill="#fff" stroke="#cdcdcd" stroke-width="1.5"/><circle cx="858.6" cy="572.6" r="5" fill="none" stroke="#5a6082" stroke-width="1.3"/><path d="M862.3 576.3l2.500 2.500" stroke="#5a6082" stroke-width="1.400" stroke-linecap="round"/><path d="M856.600 572.6h4" stroke="#5a6082" stroke-width="1.300" stroke-linecap="round"/><circle cx="858.8" cy="605.5" r="12.9" fill="#fff" stroke="#cdcdcd" stroke-width="1.5"/><path d="M855.8 603.6h6.200M855.8 607.6h6.200" stroke="#5a6082" stroke-width="1.900" stroke-linecap="round"/></svg>
<div class="a" style="left:-1px;top:642px;width:890px;height:30px;background:#fff;border:1px solid #c4cedd;border-radius:0 6px 0 0;font-size:10px;text-align:center;line-height:20px;color:#575E75"><span class="j" style="width:60.00px">バックパック</span></div>
<div class="a" id="stage" style="left:895px;top:70px;width:362.500px;height:272px;border:1px solid #c4cedd;border-radius:6px;background:#CFBBE8;overflow:hidden"><svg class="a" style="left:0;top:0" width="361" height="270" viewBox="896 71 361 270"><defs><radialGradient id="bal" cx="0.68" cy="0.26" r="0.8"><stop offset="0" stop-color="#00FFFF"/><stop offset="0.42" stop-color="#0A9CEB"/><stop offset="1" stop-color="#0A4CD2"/></radialGradient></defs><path d="M 1075.7,124.0 C 1065.4 92.1 1036.0 72.5 1002.2 72.5 C 958.2 72.5 928.8 110.5 928.8 163.0 C 928.8 210.4 967.0 243.8 1003.7 275.4 C 1036.0 303.5 1068.1 321.0 1075.7 338.6 C 1083.3 321.0 1115.4 303.5 1147.7 275.4 C 1184.4 243.8 1222.6 210.4 1222.6 163.0 C 1222.6 110.5 1193.2 72.5 1149.2 72.5 C 1115.4 72.5 1086.0 92.1 1075.7 124.0 Z" fill="#E9D5FC"/><path d="M 1075.7,141.4 C 1067.0 117.0 1042.2 102.0 1013.6 102.0 C 976.3 102.0 951.5 131.4 951.5 172.0 C 951.5 209.2 983.8 235.3 1014.8 260.1 C 1042.2 282.2 1069.2 295.9 1075.7 309.7 C 1082.2 295.9 1109.2 282.2 1136.6 260.1 C 1167.6 235.3 1199.9 209.2 1199.9 172.0 C 1199.9 131.4 1175.1 102.0 1137.8 102.0 C 1109.2 102.0 1084.4 117.0 1075.7 141.4 Z" fill="#F1E6FE"/><path d="M1024.6 247.6c-.6 3 2.6 4.6 1.6 8.2c-1 3.6 -.6 7.6 1 11.4" fill="none" stroke="#1FB6F0" stroke-width="1.2"/><path d="M1022.8 247.2l4.6 0l-.9 4.2l-2.9 0z" fill="#0A48CF"/><path d="M1027.3 205.9c9.6 0 16.9 8.6 16.9 19.4c0 10.8 -9.4 23.2 -18.4 23.2c-8.2 0 -15.6 -11 -15.6 -22c0 -11.6 7.6 -20.6 17.1 -20.6z" fill="url(#bal)" stroke="#fff" stroke-opacity=".8" stroke-width=".8"/><rect x="900.5" y="75.5" width="75" height="18" rx="3" fill="#E5F0FF" stroke="#c4cedd"/><text x="907" y="84.8" font-size="9" font-weight="bold" fill="#575E75" dominant-baseline="central" textLength="27.00">タイム</text><rect x="940" y="78" width="30" height="13" rx="3" fill="#FF8C1A"/><text x="955" y="84.8" font-size="9" fill="#fff" text-anchor="middle" dominant-baseline="central">0</text><rect x="982.0" y="75.5" width="67" height="18" rx="3" fill="#E5F0FF" stroke="#c4cedd"/><text x="988.5" y="84.8" font-size="9" font-weight="bold" fill="#575E75" dominant-baseline="central" textLength="18.00">得点</text><rect x="1013" y="78" width="30" height="13" rx="3" fill="#FF8C1A"/><text x="1028" y="84.8" font-size="9" fill="#fff" text-anchor="middle" dominant-baseline="central">25</text></svg></div>
<svg class="a" style="left:896px;top:42px" width="50" height="24" viewBox="896 42 50 24"><path d="M900.500 46.800V60.200" stroke="#3FA53F" stroke-width="1.400" stroke-linecap="round"/><path d="M900.500 47c2.300-1.500 4.600-1.100 6.500-.1c1.900 1 4.100 1.200 6.700-.4v10c-2.600 1.600-4.800 1.400-6.700 .4c-1.900-1-4.200-1.400-6.500 .1z" fill="#4CBF56" stroke="#3FA53F" stroke-width=".9" stroke-linejoin="round"/><path d="M928.200 46.300h5.800l4.100 4.100v5.800l-4.100 4.100h-5.800l-4.100-4.100v-5.800z" fill="#EFA6AE" stroke="#E3939D" stroke-width=".8"/></svg>
<div class="a" style="left:1179px;top:41px;width:51px;height:25px;border:1px solid #d9d9d9;border-radius:3px;background:#fff"></div>
<div class="a" style="left:1203.500px;top:41px;width:1px;height:25px;background:#d9d9d9"></div>
<div class="a" style="left:1232px;top:41px;width:26px;height:25px;border:1px solid #d9d9d9;border-radius:3px;background:#fff"></div>
<svg class="a" style="left:1179px;top:41px" width="78" height="25" viewBox="1179 41 78 25"><rect x="1186.300" y="48.800" width="10.400" height="8.800" rx="1.300" fill="none" stroke="#6b6b6b" stroke-width="1"/><rect x="1193.300" y="50" width="2.600" height="7" fill="#b5b5b5" stroke="#6b6b6b" stroke-width=".6"/><rect x="1211.500" y="48.800" width="10.400" height="8.800" rx="1.300" fill="#fff" stroke="#4C97FF" stroke-width="1.100"/><path d="M1216.300 49v8.500M1216.300 53.300h5.400" stroke="#4C97FF" stroke-width="1"/><rect x="1216.800" y="49.300" width="4.600" height="3.600" fill="#4C97FF"/><g stroke="#2b3248" stroke-width="1.200" fill="#2b3248" stroke-linejoin="round"><path d="M1240 48.600l3.600 3.600M1249.800 48.600l-3.600 3.600M1240 58.200l3.600-3.600M1249.800 58.200l-3.600-3.600" fill="none"/><path d="M1239.500 51.400v-3.200h3.200z M1250.300 51.400v-3.200h-3.200z M1239.500 55.400v3.200h3.200z M1250.300 55.400v3.200h-3.200z" stroke-width=".6"/></g></svg>
<div class="a" style="left:895px;top:348px;width:303px;height:330px;border:1px solid #c4cedd;border-radius:6px 6px 0 0;background:#E9F1FC;overflow:hidden">
<div class="a" style="left:0;top:0;width:301px;height:103px;background:#fff;border-bottom:1px solid #d9dde4"></div>
</div>
<div class="lbl" style="left:905px;top:358px;font-weight:bold"><span class="j" style="width:37.50px">スプライト</span></div>
<div class="inp" style="left:905px;top:372px;width:96px;text-align:left;padding-left:10px;font-size:7.500px"><span class="j" style="width:30.00px">ふうせん</span></div>
<svg class="a" style="left:1027.500px;top:370.200px" width="16" height="14" viewBox="0 0 16 14"><path transform="translate(8 7.300) scale(.86) translate(-8 -7.300)" d="M3.2 7.300h9.600M4.400 4.800L1.900 7.300l2.500 2.500M11.600 4.800l2.500 2.500l-2.500 2.500" fill="none" stroke="#3d445c" stroke-width="1.700" stroke-linecap="round" stroke-linejoin="round"/></svg>
<div class="lbl" style="left:1048px;top:372px;font-weight:bold;font-size:8px">x</div>
<div class="inp" style="left:1058px;top:365.500px;width:36.500px">-70</div>
<svg class="a" style="left:1121.800px;top:369px" width="14" height="17" viewBox="0 0 14 17"><path transform="translate(7 8.400) scale(.84) translate(-7 -8.400)" d="M7 3.200v10.400M4.500 4.600L7 2.100l2.500 2.500M4.500 12.200l2.500 2.500l2.500-2.500" fill="none" stroke="#3d445c" stroke-width="1.700" stroke-linecap="round" stroke-linejoin="round"/></svg>
<div class="lbl" style="left:1141px;top:372px;font-weight:bold;font-size:8px">y</div>
<div class="inp" style="left:1151.500px;top:365.500px;width:36.500px">-55</div>
<div class="lbl" style="left:905px;top:403px"><span class="j" style="width:30.00px">表示する</span></div>
<div class="a" style="left:905px;top:417px;width:51px;height:26px;border:1px solid #d9d9d9;border-radius:3px;background:#fff"></div>
<div class="a" style="left:930px;top:417px;width:1px;height:26px;background:#d9d9d9"></div>
<svg class="a" style="left:905px;top:417px" width="51" height="26" viewBox="0 0 51 26"><path d="M8.400 12.800c1.400-2.300 2.800-3.500 4.400-3.500s3 1.200 4.400 3.500c-1.400 2.300-2.800 3.500-4.400 3.500s-3-1.200-4.400-3.500z" fill="#fff" stroke="#3D8BFF" stroke-width="1.800" stroke-linejoin="round"/><circle cx="12.800" cy="12.800" r="1.500" fill="#3D8BFF"/><path d="M33.800 12.800c1.400-2.300 2.800-3.500 4.400-3.500s3 1.200 4.400 3.500c-1.400 2.300-2.800 3.500-4.400 3.500s-3-1.200-4.400-3.500z" fill="none" stroke="#6a6a6a" stroke-width="1.900" stroke-linejoin="round"/><path d="M34.200 17.200L42.400 8.300" stroke="#fff" stroke-width="2.600"/><path d="M33.900 17.100L42.500 8.400" stroke="#6a6a6a" stroke-width="1" stroke-linecap="round"/></svg>
<div class="lbl" style="left:1024px;top:403.500px"><span class="j" style="width:22.50px">大きさ</span></div>
<div class="inp" style="left:1023.500px;top:417.500px;width:48.500px">60</div>
<div class="lbl" style="left:1140px;top:403.500px"><span class="j" style="width:15.00px">向き</span></div>
<div class="inp" style="left:1139.500px;top:417.500px;width:48.500px">120</div>
<div class="a" style="left:899px;top:455px;width:59.500px;height:54.500px;border-radius:8px;background:rgba(76,151,255,.28)"></div>
<div class="a" style="left:902px;top:458px;width:53.500px;height:48.500px;border-radius:6px;background:#4C97FF;overflow:hidden"><div class="a" style="left:1.600px;top:1.600px;width:50.300px;height:28.400px;background:#fff;border-radius:4.500px 4.500px 0 0"></div><div class="a" style="left:0;top:31px;width:53.500px;text-align:center;color:#fff;font-size:7.500px;line-height:16px;font-weight:bold"><span class="j" style="width:30.00px">ふうせん</span></div></div>
<svg class="a" style="left:915px;top:460px" width="28" height="28" viewBox="0 0 28 28"><path d="M13 16.800c-.3 1.600 1 2 .6 3.600c-.4 1.600 0 2.400 .4 3.400" fill="none" stroke="#1FB6F0" stroke-width=".8"/><path d="M13.500 1.500c3.700 0 6.600 3.300 6.600 7.500c0 4.200-3.600 8-7.100 8c-3.200 0-6-3.400-6-7.600c0-4.500 2.900-7.900 6.500-7.900z" fill="url(#bal2)"/><defs><radialGradient id="bal2" cx="0.68" cy="0.26" r="0.8"><stop offset="0" stop-color="#00FFFF"/><stop offset="0.42" stop-color="#0A9CEB"/><stop offset="1" stop-color="#0A4CD2"/></radialGradient></defs></svg>
<svg class="a" style="left:939px;top:451px" width="24" height="24" viewBox="0 0 24 24"><circle cx="11.700" cy="11.900" r="10.500" fill="rgba(76,151,255,.45)"/><circle cx="11.700" cy="11.900" r="8.900" fill="#4C97FF"/><path d="M7.600 8.800h8.200l-.7 7.400a1 1 0 0 1-1 .9h-4.800a1 1 0 0 1-1-.9z" fill="#fff"/><path d="M6.900 7.300h9.600" stroke="#fff" stroke-width="1.300" stroke-linecap="round"/><path d="M10 7v-.8a.6.600 0 0 1 .6-.6h2.200a.6.600 0 0 1 .6.600V7" fill="none" stroke="#fff" stroke-width=".9"/><path d="M10.400 11.300l2.600 2.600M13 11.300l-2.600 2.600" stroke="#4C97FF" stroke-width="1" stroke-linecap="round"/></svg>
<div class="a" style="left:1203px;top:348px;width:55px;height:330px;border:1px solid #c4cedd;border-radius:6px 6px 0 0;background:#fff"></div>
<div class="a" style="left:1204px;top:380px;width:53px;height:1px;background:#d9dde4"></div>
<div class="lbl" style="left:1204px;top:359px;width:53px;text-align:center;font-weight:bold"><span class="j" style="width:30.00px">ステージ</span></div>
<svg class="a" style="left:1207.300px;top:384.200px" width="46.700" height="35" viewBox="896 71 361 270"><rect x="896" y="71" width="361" height="270" rx="14" fill="#CFBBE8"/><path d="M 1075.7,124.0 C 1065.4 92.1 1036.0 72.5 1002.2 72.5 C 958.2 72.5 928.8 110.5 928.8 163.0 C 928.8 210.4 967.0 243.8 1003.7 275.4 C 1036.0 303.5 1068.1 321.0 1075.7 338.6 C 1083.3 321.0 1115.4 303.5 1147.7 275.4 C 1184.4 243.8 1222.6 210.4 1222.6 163.0 C 1222.6 110.5 1193.2 72.5 1149.2 72.5 C 1115.4 72.5 1086.0 92.1 1075.7 124.0 Z" fill="#E9D5FC"/><path d="M 1075.7,141.4 C 1067.0 117.0 1042.2 102.0 1013.6 102.0 C 976.3 102.0 951.5 131.4 951.5 172.0 C 951.5 209.2 983.8 235.3 1014.8 260.1 C 1042.2 282.2 1069.2 295.9 1075.7 309.7 C 1082.2 295.9 1109.2 282.2 1136.6 260.1 C 1167.6 235.3 1199.9 209.2 1199.9 172.0 C 1199.9 131.4 1175.1 102.0 1137.8 102.0 C 1109.2 102.0 1084.4 117.0 1075.7 141.4 Z" fill="#F1E6FE"/></svg>
<div class="lbl" style="left:1204px;top:430px;width:53px;text-align:center;font-size:7.500px"><span class="j" style="width:15.00px">背景</span></div>
<div class="lbl" style="left:1204px;top:446.500px;width:53px;text-align:center;font-size:7.500px;font-weight:bold">1</div>
<svg class="a" style="left:1148.4px;top:618.5px" width="40" height="40" viewBox="-20 -20 40 40"><circle r="19.300" fill="rgba(76,151,255,.35)"/><circle r="16.400" fill="#4C97FF"/><g transform="translate(2.600,.6) scale(1.170)"><path d="M-6.500 -5.500l2.600 2.200h3.800l2.600-2.200c.5 0 .8 .3 .8 .8v6.700c0 3-2.300 4.800-5.300 4.800s-5.300-1.800-5.300-4.800v-6.700c0-.5 .3-.8 .8-.8z" fill="#fff"/><path d="M-3.400 2.600h2.800l-1.400 1.500z" fill="#4C97FF"/><path d="M-4.600 5.200c1.600 1 3.600 1 5.200 0" stroke="#4C97FF" stroke-width=".8" fill="none"/></g><path d="M8 -9.300v4.600M5.700 -7h4.600" stroke="#fff" stroke-width="1.500" stroke-linecap="round"/></svg>
<svg class="a" style="left:1210.7px;top:618.5px" width="40" height="40" viewBox="-20 -20 40 40"><circle r="19.300" fill="rgba(76,151,255,.35)"/><circle r="16.400" fill="#4C97FF"/><rect x="-8.500" y="-6" width="15" height="12" rx="2" fill="#fff"/><path d="M-7 3.500l3.500-3.500l2.500 2l3.500-3.500l2.500 2.500v3.500h-12z" fill="#4C97FF"/><path d="M7.200 -10v5M4.700 -7.500h5" stroke="#fff" stroke-width="1.400" stroke-linecap="round"/></svg>
<div class="a" style="left:150px;top:643px;width:739px;height:21px;background:linear-gradient(90deg,rgba(0,0,0,0),rgba(0,0,0,.085) 120px);-webkit-mask-image:linear-gradient(rgba(0,0,0,.35),#000);mask-image:linear-gradient(rgba(0,0,0,.35),#000)"></div>
<div class="a" style="left:150px;top:655px;width:960px;height:9px;background:linear-gradient(rgba(0,0,0,0),rgba(0,0,0,.10));-webkit-mask-image:linear-gradient(90deg,transparent,#000 120px,#000 800px,transparent);mask-image:linear-gradient(90deg,transparent,#000 120px,#000 800px,transparent)"></div>
<svg class="a" style="left:0;top:656px" width="1264" height="10" viewBox="0 656 1264 10"><path d="M0 656v10h1264v-10c0 5-2.500 7.800-7.500 7.800h-1249c-5 0-7.500-2.800-7.500-7.800z" fill="#1f1f1f"/></svg></body></html>
